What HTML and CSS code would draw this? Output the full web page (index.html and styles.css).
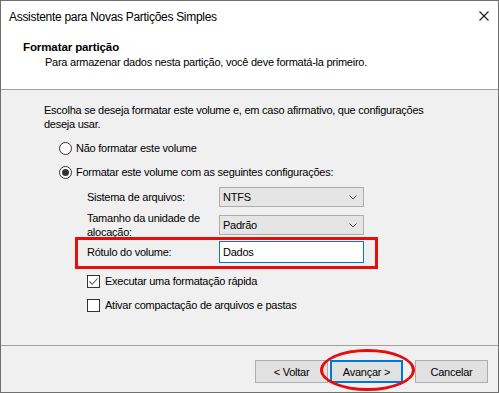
FILE: index.html
```html
<!DOCTYPE html>
<html lang="pt-BR">
<head>
  <meta charset="UTF-8" />
  <meta name="viewport" content="width=device-width, initial-scale=1.0"/>
  <title>Assistente para Novas Partições Simples</title>
  <link rel="stylesheet" href="styles.css">
</head>
<body>
  <div class="window">
    <div class="titlebar">
      <span class="title">Assistente para Novas Partições Simples</span>
      <svg class="close" width="10" height="10" viewBox="0 0 10 10">
        <path d="M0.5 0.5 L9.5 9.5 M9.5 0.5 L0.5 9.5" stroke="#1a1a1a" stroke-width="1.1" fill="none"/>
      </svg>
    </div>

    <div class="header">
      <h1>Formatar partição</h1>
      <p>Para armazenar dados nesta partição, você deve formatá-la primeiro.</p>
    </div>

    <div class="content">
      <p class="intro">Escolha se deseja formatar este volume e, em caso afirmativo, que configurações deseja usar.</p>

      <div class="option">
        <span class="radio"></span>
        <span>Não formatar este volume</span>
      </div>
      <div class="option">
        <span class="radio checked"></span>
        <span>Formatar este volume com as seguintes configurações:</span>
      </div>

      <div class="settings">
        <div class="field">
          <span class="field-label">Sistema de arquivos:</span>
          <div class="combo">
            <span>NTFS</span>
            <svg width="8" height="5" viewBox="0 0 8 5"><path d="M0.5 0.5 L4 4 L7.5 0.5" stroke="#444" fill="none"/></svg>
          </div>
        </div>
        <div class="field">
          <span class="field-label wrap">Tamanho da unidade de alocação:</span>
          <div class="combo">
            <span>Padrão</span>
            <svg width="8" height="5" viewBox="0 0 8 5"><path d="M0.5 0.5 L4 4 L7.5 0.5" stroke="#444" fill="none"/></svg>
          </div>
        </div>
        <div class="field marked">
          <span class="field-label">Rótulo do volume:</span>
          <div class="textbox">Dados</div>
        </div>

        <div class="check-row first">
          <span class="box">
            <svg width="11" height="11" viewBox="0 0 11 11"><path d="M1.5 5.5 L4.2 8.3 L9.5 2.5" stroke="#555" stroke-width="1.1" fill="none"/></svg>
          </span>
          <span>Executar uma formatação rápida</span>
        </div>
        <div class="check-row">
          <span class="box"></span>
          <span>Ativar compactação de arquivos e pastas</span>
        </div>
      </div>
    </div>

    <div class="footer">
      <div class="nav">
        <button class="btn">&lt; Voltar</button>
        <button class="btn default">Avançar &gt;</button>
      </div>
      <button class="btn cancel">Cancelar</button>
    </div>
  </div>
</body>
</html>
```

FILE: styles.css
```css
* {
  box-sizing: border-box;
  margin: 0;
  padding: 0;
}

body {
  font-family: "Liberation Sans", Arial, sans-serif;
  font-size: 11px;
  letter-spacing: -0.25px;
  color: #000;
  background: #f0f0f0;
}

.window {
  width: 499px;
  height: 393px;
  border: 1px solid #6f6f6f;
  display: flex;
  flex-direction: column;
  background: #f0f0f0;
}

.titlebar {
  height: 30px;
  background: #fff;
  display: flex;
  align-items: center;
  justify-content: space-between;
  padding: 0 9px 0 8px;
  font-size: 12px;
  letter-spacing: -0.3px;
}

.title {
  padding-top: 1px;
}

.close {
  display: block;
}

.header {
  height: 59px;
  background: #fff;
  border-bottom: 1px solid #a0a0a0;
  padding: 9px 0 0 22px;
}

.header h1 {
  font-size: 11.5px;
  font-weight: bold;
  line-height: 15px;
  letter-spacing: -0.1px;
}

.header p {
  line-height: 15px;
  margin-left: 22px;
}

.content {
  flex: 1;
  padding: 13px 30px 0 43px;
}

.intro {
  line-height: 14px;
  max-width: 410px;
}

.option {
  display: flex;
  align-items: center;
  height: 16px;
  margin-top: 8px;
  margin-left: 15px;
  gap: 4px;
}

.option:first-of-type {
  margin-top: 9px;
}

.radio {
  width: 13px;
  height: 13px;
  border: 1px solid #333;
  border-radius: 50%;
  background: #fff;
  display: flex;
  align-items: center;
  justify-content: center;
}

.radio.checked::before {
  content: "";
  width: 7px;
  height: 7px;
  border-radius: 50%;
  background: #333;
}

.settings {
  margin-left: 43px;
  width: 277px;
}

.field {
  display: flex;
  align-items: center;
  height: 20px;
  margin-top: 7px;
}

.field + .field {
  margin-top: 8px;
}

.field.marked {
  position: relative;
  height: 22px;
  margin-top: 6px;
}

.field.marked::after {
  content: "";
  position: absolute;
  left: -12px;
  right: -14px;
  top: -4px;
  bottom: -6px;
  border: 3px solid #e60d0d;
}

.field-label {
  width: 132px;
  flex-shrink: 0;
}

.field-label.wrap {
  line-height: 14px;
  padding-right: 12px;
}

.combo {
  flex: 1;
  height: 20px;
  background: #e5e5e5;
  border: 1px solid #adadad;
  display: flex;
  align-items: center;
  justify-content: space-between;
  padding: 0 6px 0 3px;
}

.textbox {
  flex: 1;
  height: 22px;
  background: #fff;
  border: 1px solid #0078d7;
  display: flex;
  align-items: center;
  padding-left: 3px;
}

.check-row {
  display: flex;
  align-items: center;
  height: 16px;
  margin-top: 8px;
  gap: 5px;
}

.check-row.first {
  margin-top: 10px;
}

.box {
  width: 13px;
  height: 13px;
  border: 1px solid #333;
  background: #fff;
  display: flex;
  align-items: center;
  justify-content: center;
}

.footer {
  height: 47px;
  border-top: 1px solid #a0a0a0;
  display: flex;
  justify-content: flex-end;
  align-items: flex-start;
  padding: 14px 10px 0 0;
  gap: 12px;
}

.nav {
  display: flex;
  gap: 2px;
}

.btn {
  width: 73px;
  height: 23px;
  background: #e1e1e1;
  border: 1px solid #adadad;
  font-family: inherit;
  font-size: 11px;
  letter-spacing: -0.25px;
  color: #000;
}

.btn.default {
  position: relative;
  border: 2px solid #0078d7;
}

.btn.default::after {
  content: "";
  position: absolute;
  left: -12px;
  right: -14px;
  top: -13px;
  bottom: -10px;
  border: 3px solid #e60d0d;
  border-radius: 50%;
}
```
